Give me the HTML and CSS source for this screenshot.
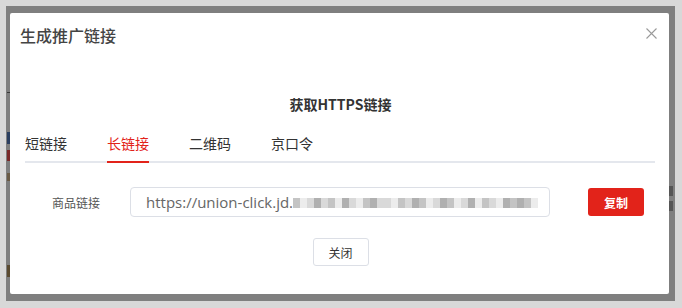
FILE: index.html
```html
<!DOCTYPE html>
<html lang="zh-CN">
<head>
<meta charset="utf-8">
<title>生成推广链接</title>
<link rel="stylesheet" href="styles.css">
</head>
<body>
<div class="backdrop">
  <div class="strip-left">
    <span class="mark m1"></span>
    <span class="mark m2"></span>
    <span class="mark m3"></span>
    <span class="mark m4"></span>
    <span class="mark m5"></span>
  </div>
  <div class="modal">
    <div class="modal-header">
      <h2 class="modal-title">生成推广链接</h2>
      <button class="modal-close" aria-label="关闭">
        <svg width="11" height="11" viewBox="0 0 11 11"><path d="M0.5 0.5 L10.5 10.5 M10.5 0.5 L0.5 10.5" stroke="#9a9a9a" stroke-width="1.1" fill="none"/></svg>
      </button>
    </div>
    <div class="modal-body">
      <div class="subtitle">获取HTTPS链接</div>
      <div class="tabs">
        <div class="tab">短链接</div>
        <div class="tab active">长链接</div>
        <div class="tab">二维码</div>
        <div class="tab">京口令</div>
      </div>
      <div class="form-row">
        <label class="form-label">商品链接</label>
        <div class="input">
          <span class="input-text">https://union-click.jd.</span>
          <span class="mosaic">
            <i class="c1"></i><i class="c3"></i><i class="c2"></i><i class="c4"></i><i class="c2"></i><i class="c1"></i><i class="c3"></i><i class="c4"></i><i class="c2"></i><i class="c3"></i><i class="c1"></i><i class="c4"></i><i class="c2"></i><i class="c2"></i><i class="c3"></i><i class="c1"></i><i class="c2"></i><i class="c4"></i><i class="c1"></i><i class="c3"></i><i class="c2"></i><i class="c4"></i><i class="c1"></i><i class="c3"></i><i class="c2"></i><i class="c4"></i><i class="c3"></i><i class="c1"></i><i class="c2"></i><i class="c3"></i><i class="c4"></i><i class="c1"></i><i class="c4"></i><i class="c1"></i><i class="c3"></i>
          </span>
        </div>
        <button class="btn-copy">复制</button>
      </div>
      <div class="footer">
        <button class="btn-close">关闭</button>
      </div>
    </div>
  </div>
  <div class="strip-right">
    <span class="mark r1"></span>
    <span class="mark r2"></span>
  </div>
</div>
</body>
</html>
```
FILE: styles.css
```css
* { box-sizing: border-box; }
html, body { margin: 0; padding: 0; }
body {
  width: 682px;
  height: 308px;
  background: #d8d8d8;
  padding: 6px 7px 7px 6px;
  font-family: "Noto Sans CJK SC", "Noto Sans", sans-serif;
  overflow: hidden;
}
.backdrop {
  width: 669px;
  height: 295px;
  background: #7f7f7f;
  display: flex;
  padding: 7px 0;
}
.strip-left {
  width: 4px;
  display: flex;
  flex-direction: column;
  position: relative;
}
.strip-right {
  width: 6px;
  display: flex;
  flex-direction: column;
  position: relative;
}
.mark { position: absolute; display: block; }
.m1 { left: 1px; top: 79px; width: 3px; height: 1px; background: #3a3a3a; }
.m2 { left: 1px; top: 119px; width: 3px; height: 12px; background: #2b3f60; }
.m3 { left: 1px; top: 137px; width: 3px; height: 11px; background: #7a2a2a; }
.m4 { left: 1px; top: 160px; width: 3px; height: 8px; background: #6a5a45; }
.m5 { left: 1px; top: 252px; width: 3px; height: 12px; background: #5a4a30; }
.r1 { left: 0; top: 173px; width: 4px; height: 10px; background: #555; }
.r2 { left: 0; top: 188px; width: 4px; height: 10px; background: #555; }

.modal {
  width: 659px;
  height: 281px;
  background: #fff;
  border-radius: 2px;
  display: flex;
  flex-direction: column;
}
.modal-header {
  display: flex;
  justify-content: space-between;
  align-items: flex-start;
  padding: 10px 12px 0 10px;
  height: 78px;
}
.modal-title {
  margin: 0;
  font-size: 16px;
  line-height: 24px;
  font-weight: 500;
  color: #444;
}
.modal-close {
  border: 0;
  background: none;
  padding: 0;
  margin-top: 5px;
  width: 11px;
  height: 11px;
  display: flex;
}
.modal-body {
  padding: 0 14px 0 15px;
  display: flex;
  flex-direction: column;
}
.subtitle {
  text-align: center;
  font-size: 14px;
  line-height: 26px;
  font-weight: 700;
  color: #333;
  padding-left: 1px;
}
.tabs {
  margin-top: 16px;
  display: flex;
  gap: 40px;
  border-bottom: 2px solid #e4e7ed;
}
.tab {
  font-size: 14px;
  line-height: 20px;
  padding-bottom: 8px;
  color: #333;
  border-bottom: 2px solid transparent;
  margin-bottom: -2px;
}
.tab.active {
  color: #e2231a;
  border-bottom-color: #e2231a;
}
.form-row {
  margin-top: 24px;
  display: flex;
  align-items: center;
}
.form-label {
  width: 75px;
  text-align: right;
  font-size: 12px;
  color: #555;
  padding-top: 1px;
}
.input {
  margin-left: 30px;
  width: 420px;
  height: 30px;
  border: 1px solid #dcdfe6;
  border-radius: 4px;
  padding: 0 10px 0 15px;
  display: flex;
  align-items: center;
  overflow: hidden;
}
.input-text {
  font-family: "Open Sans", "Noto Sans", sans-serif;
  font-size: 15px;
  color: #666;
  white-space: nowrap;
  line-height: 28px;
}
.mosaic {
  display: flex;
  height: 10px;
  margin-top: 2px;
  flex: none;
}
.mosaic i {
  display: block;
  width: 7px;
  height: 10px;
}
.mosaic .c1 { background: #c4c4c4; }
.mosaic .c2 { background: #d9d9d9; }
.mosaic .c3 { background: #ececec; }
.mosaic .c4 { background: #b0b0b0; }
.btn-copy {
  margin-left: 38px;
  width: 56px;
  height: 28px;
  background: #e2231a;
  border: 0;
  border-radius: 3px;
  color: #fff;
  font-family: inherit;
  font-size: 12px;
  font-weight: 700;
  padding: 0;
}
.footer {
  margin-top: 21px;
  display: flex;
  justify-content: center;
  padding-left: 1px;
}
.btn-close {
  width: 56px;
  height: 28px;
  background: #fff;
  border: 1px solid #dcdfe6;
  border-radius: 3px;
  font-family: inherit;
  font-size: 12px;
  color: #333;
  padding: 0;
}
```
